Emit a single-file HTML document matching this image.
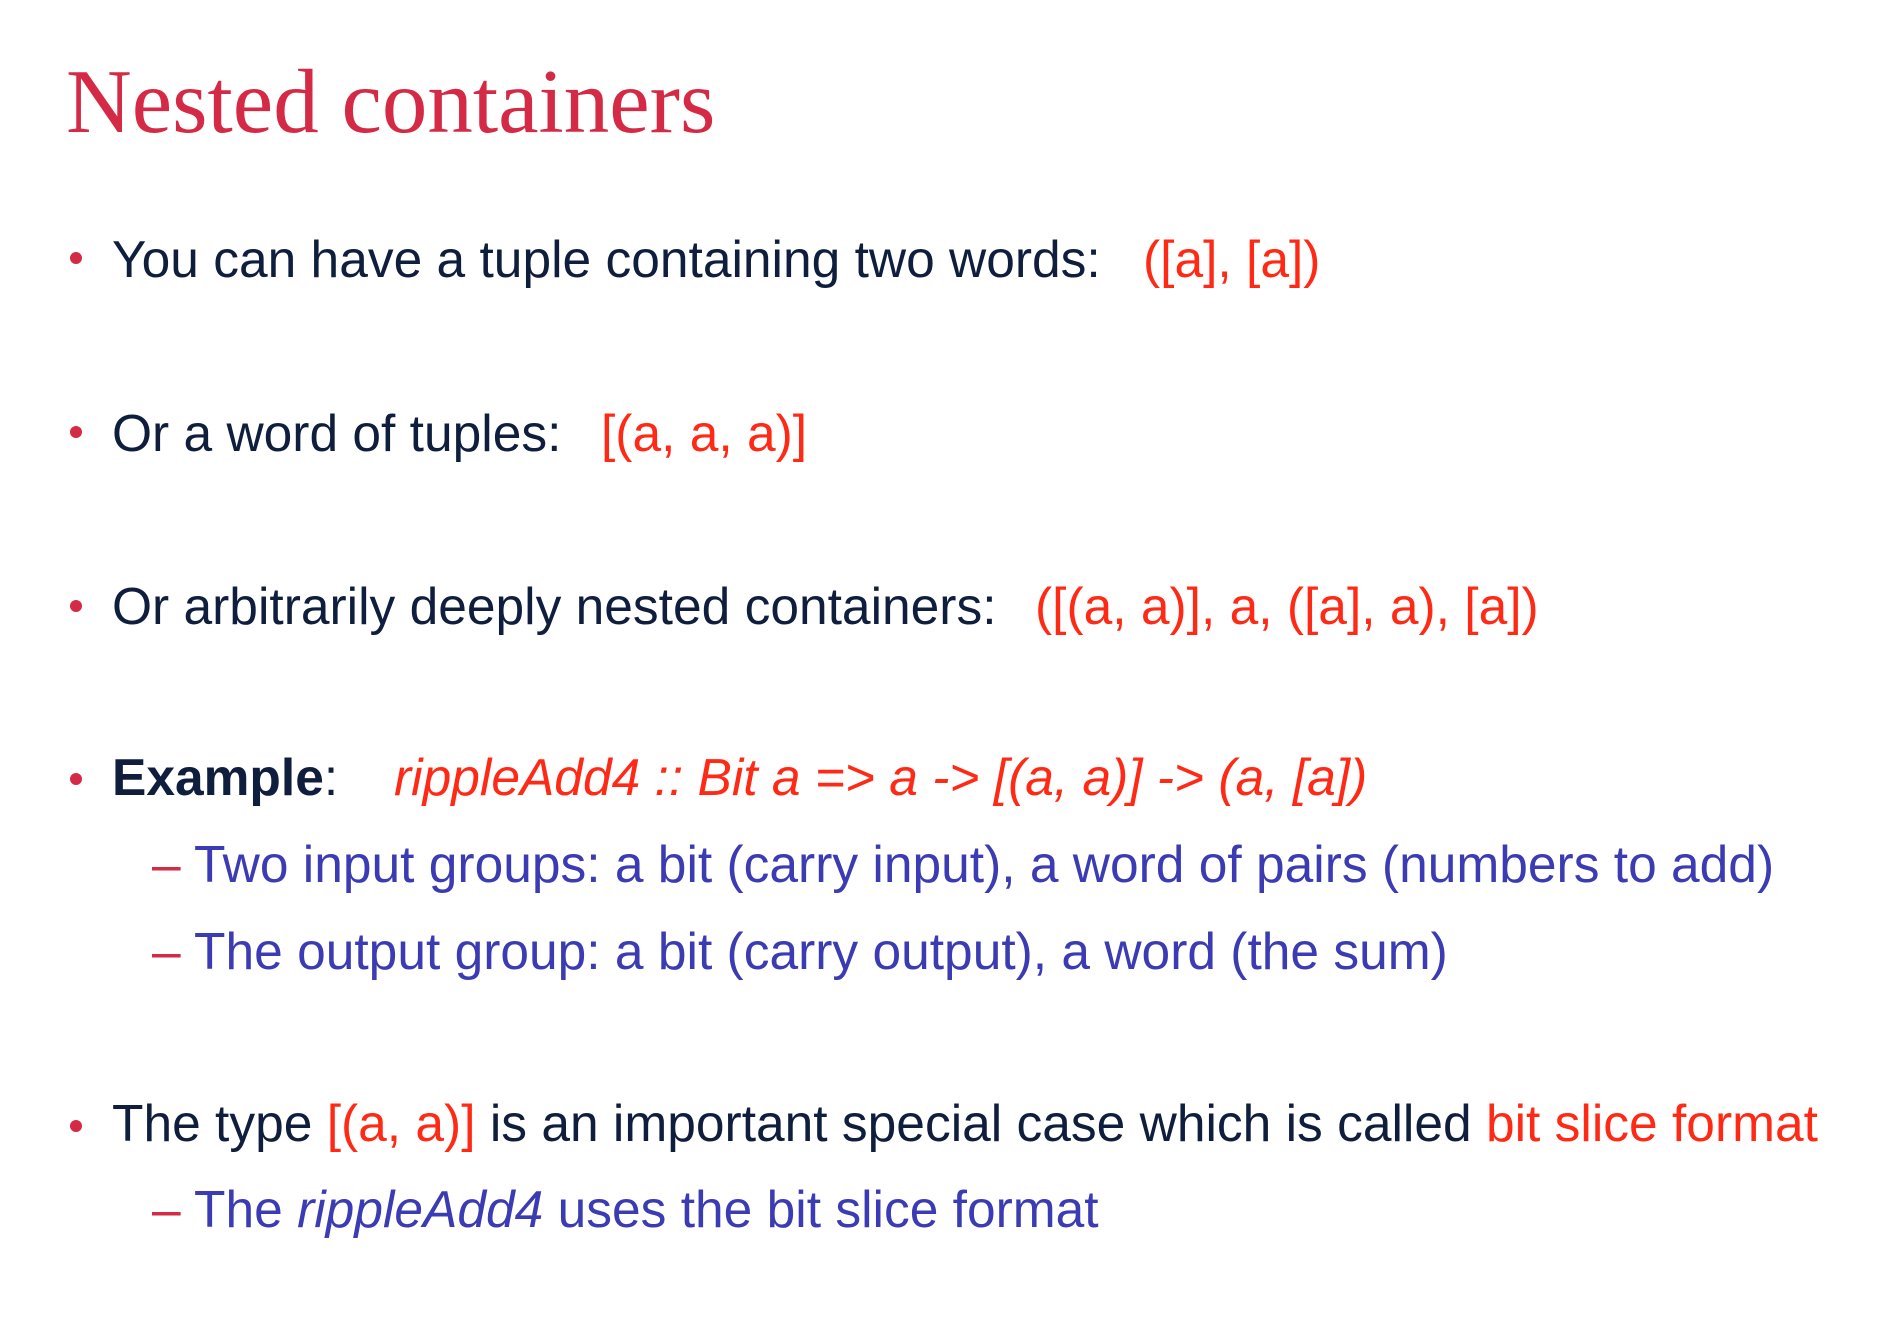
<!DOCTYPE html>
<html><head><meta charset="utf-8"><style>
html,body{margin:0;padding:0;background:#fff;width:1881px;height:1326px;overflow:hidden;position:relative}
.t{position:absolute;font-family:"Liberation Serif",serif;color:#d42a45;font-size:91px;left:66px;top:56px;line-height:1;white-space:nowrap}
.l{position:absolute;font-family:"Liberation Sans",sans-serif;font-size:51.5px;color:#0f1e3d;white-space:nowrap;line-height:1}
.b{position:absolute;width:12px;height:12px;border-radius:50%;background:#d42a45}
.r{color:#ff2a16}
.s{color:#3b3bb3;font-size:51.5px}
.d{color:#d42a45}
</style></head><body>
<div class="t">Nested containers</div>

<div class="b" style="left:70px;top:252px"></div>
<div class="l" style="left:112px;top:234px">You can have a tuple containing two words:</div>
<div class="l r" style="left:1143px;top:234px">([a], [a])</div>

<div class="b" style="left:70px;top:426px"></div>
<div class="l" style="left:112px;top:408px">Or a word of tuples:</div>
<div class="l r" style="left:601px;top:408px">[(a, a, a)]</div>

<div class="b" style="left:70px;top:600px"></div>
<div class="l" style="left:112px;top:581px">Or arbitrarily deeply nested containers:</div>
<div class="l r" style="left:1035px;top:581px">([(a, a)], a, ([a], a), [a])</div>

<div class="b" style="left:70px;top:773px"></div>
<div class="l" style="left:112px;top:752px"><b>Example</b>:</div>
<div class="l r" style="left:394px;top:752px;font-style:italic">rippleAdd4 :: Bit a =&gt; a -&gt; [(a, a)] -&gt; (a, [a])</div>

<div class="l s" style="left:152px;top:839px"><span class="d">–</span> Two input groups: a bit (carry input), a word of pairs (numbers to add)</div>
<div class="l s" style="left:152px;top:926px"><span class="d">–</span> The output group: a bit (carry output), a word (the sum)</div>

<div class="b" style="left:70px;top:1120px"></div>
<div class="l" style="left:112px;top:1098px">The type <span class="r">[(a, a)]</span> is an important special case which is called <span class="r">bit slice format</span></div>
<div class="l s" style="left:152px;top:1184px"><span class="d">–</span> The <i>rippleAdd4</i> uses the bit slice format</div>
</body></html>
